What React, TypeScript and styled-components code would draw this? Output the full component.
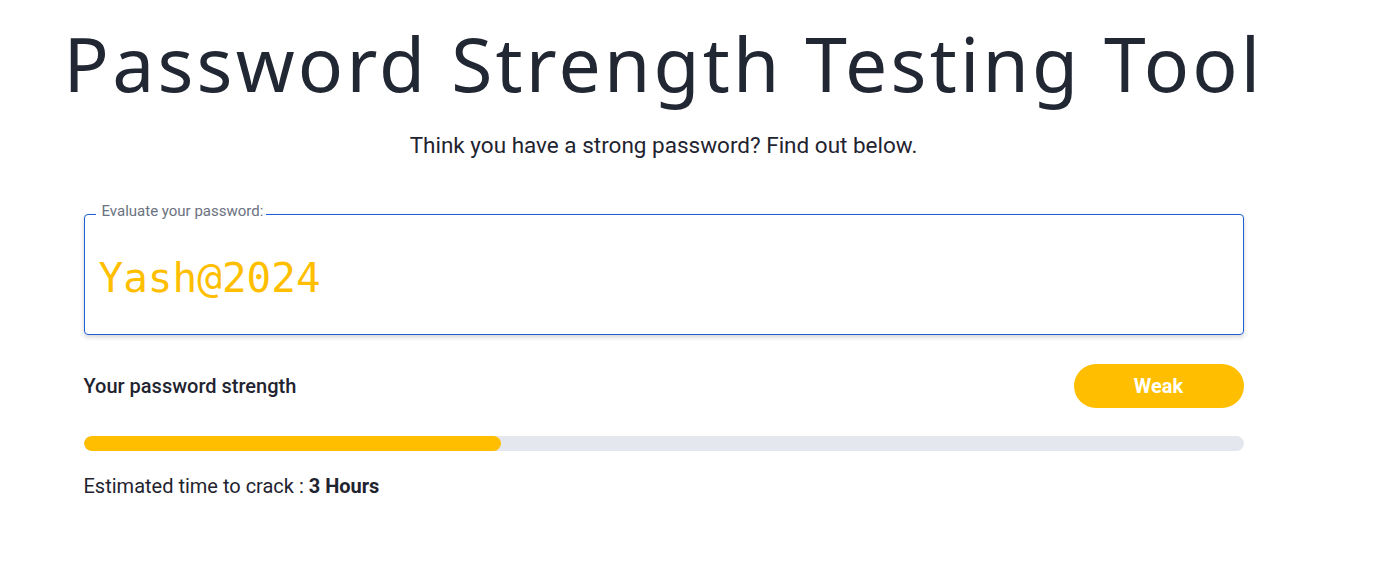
import React from 'react';
import styled, { createGlobalStyle } from 'styled-components';

const GlobalStyle = createGlobalStyle`
  body {
    margin: 0;
    background: #fff;
    font-family: Roboto, 'Liberation Sans', sans-serif;
    color: #1f2430;
  }
`;

const Page = styled.div`
  width: 1327px;
  display: flex;
  flex-direction: column;
  align-items: center;
`;

const Title = styled.h1`
  margin: 17px 0 0;
  font-family: 'Noto Sans', 'Open Sans', sans-serif;
  font-weight: 400;
  font-size: 75px;
  line-height: 92px;
  letter-spacing: 3.2px;
  color: #212733;
  white-space: nowrap;
`;

const Subtitle = styled.p`
  margin: 23px 0 0;
  font-size: 22.5px;
  line-height: 26px;
  color: #1f2430;
`;

const Content = styled.div`
  width: 1160px;
  display: flex;
  flex-direction: column;
  margin-top: 44px;
`;

const Field = styled.fieldset`
  margin: 0;
  padding: 28px 14px 32px;
  border: 1px solid #1a5fd6;
  border-radius: 4px;
  box-shadow: 0 2px 5px rgba(0, 0, 0, 0.18);

  legend {
    padding: 0 3px 6px 6px;
    margin-left: -3px;
    font-size: 15px;
    line-height: 18px;
    color: #6b7280;
  }
`;

const PasswordText = styled.div`
  font-family: 'DejaVu Sans Mono', 'Liberation Mono', monospace;
  font-size: 41px;
  line-height: 48px;
  color: #ffbf00;
`;

const StrengthRow = styled.div`
  display: flex;
  align-items: center;
  justify-content: space-between;
  margin-top: 29px;
`;

const Label = styled.span`
  font-size: 20px;
  font-weight: 500;
  color: #1f2430;
`;

const Badge = styled.div<{ $color: string }>`
  width: 170px;
  height: 44px;
  border-radius: 22px;
  background: ${p => p.$color};
  color: #fff;
  font-size: 20px;
  font-weight: 700;
  display: flex;
  align-items: center;
  justify-content: center;
`;

const Track = styled.div`
  margin-top: 28px;
  height: 15px;
  border-radius: 8px;
  background: #e5e7ef;
  overflow: hidden;
`;

const Fill = styled.div<{ $color: string }>`
  height: 100%;
  border-radius: 8px;
  background: ${p => p.$color};
`;

const Estimate = styled.p`
  margin: 23px 0 0;
  font-size: 20px;
  line-height: 24px;
  color: #1f2430;

  strong {
    font-weight: 700;
  }
`;

export default function App() {
  const strength = { label: 'Weak', color: '#ffbf00', percent: 35.95 };
  return (
    <>
      <GlobalStyle />
      <Page>
        <Title>Password Strength Testing Tool</Title>
        <Subtitle>Think you have a strong password? Find out below.</Subtitle>
        <Content>
          <Field>
            <legend>Evaluate your password:</legend>
            <PasswordText>Yash@2024</PasswordText>
          </Field>
          <StrengthRow>
            <Label>Your password strength</Label>
            <Badge $color={strength.color}>{strength.label}</Badge>
          </StrengthRow>
          <Track>
            <Fill $color={strength.color} style={{ width: `${strength.percent}%` }} />
          </Track>
          <Estimate>
            Estimated time to crack : <strong>3 Hours</strong>
          </Estimate>
        </Content>
      </Page>
    </>
  );
}
